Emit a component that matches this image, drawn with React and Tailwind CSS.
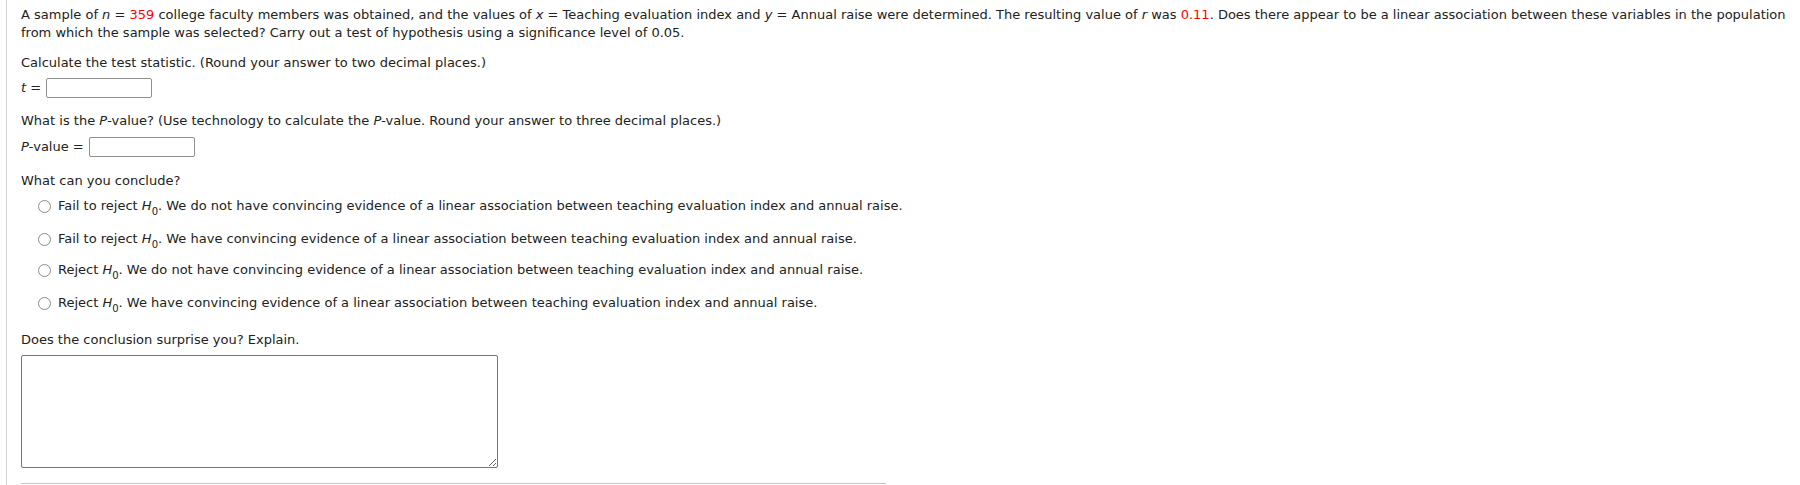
import React from "react";

const V = ({ children }) => <i className="italic">{children}</i>;
const H0 = () => (
  <>
    <i className="italic">H</i>
    <sub className="text-[10px] bottom-[-5px]">0</sub>
  </>
);

function Radio({ children, className = "" }) {
  return (
    <div className={`flex items-center h-[18px] pl-[17px] ${className}`}>
      <span className="w-[13px] h-[13px] rounded-full border border-[#8a8a8a] bg-white shrink-0" />
      <span className="ml-[7px] whitespace-nowrap">{children}</span>
    </div>
  );
}

export default function App() {
  return (
    <div
      className="w-[1800px] h-[485px] bg-white text-[#222] text-[13px] leading-[18px] overflow-hidden"
      style={{ fontFamily: '"DejaVu Sans", Verdana, sans-serif' }}
    >
      <div className="ml-[6px] h-full border-l border-[#d3d3d3] pl-[14px] pt-[6px]">
        <p className="whitespace-nowrap">
          A sample of <V>n</V> = <span className="text-[#ff0000]">359</span> college faculty members was obtained, and the values of <V>x</V> = Teaching evaluation index and <V>y</V> = Annual raise were determined. The resulting value of <V>r</V> was <span className="text-[#ff0000]">0.11</span>. Does there appear to be a linear association between these variables in the population
          <br />
          from which the sample was selected? Carry out a test of hypothesis using a significance level of 0.05.
        </p>

        <p className="mt-[12px]">Calculate the test statistic. (Round your answer to two decimal places.)</p>
        <div className="mt-[6px] flex items-center h-[20px]">
          <span><V>t</V> =</span>
          <span className="ml-[5px] w-[106px] h-[20px] border border-[#8f8f8f] rounded-[2px] bg-white" />
        </div>

        <p className="mt-[14px]">
          What is the <V>P</V>-value? (Use technology to calculate the <V>P</V>-value. Round your answer to three decimal places.)
        </p>
        <div className="mt-[7px] flex items-center h-[20px]">
          <span><V>P</V>-value =</span>
          <span className="ml-[5px] w-[106px] h-[20px] border border-[#8f8f8f] rounded-[2px] bg-white" />
        </div>

        <p className="mt-[15px]">What can you conclude?</p>
        <Radio className="mt-[7px]">
          Fail to reject <H0 />. We do not have convincing evidence of a linear association between teaching evaluation index and annual raise.
        </Radio>
        <Radio className="mt-[15px]">
          Fail to reject <H0 />. We have convincing evidence of a linear association between teaching evaluation index and annual raise.
        </Radio>
        <Radio className="mt-[13px]">
          Reject <H0 />. We do not have convincing evidence of a linear association between teaching evaluation index and annual raise.
        </Radio>
        <Radio className="mt-[15px]">
          Reject <H0 />. We have convincing evidence of a linear association between teaching evaluation index and annual raise.
        </Radio>

        <p className="mt-[19px]">Does the conclusion surprise you? Explain.</p>
        <textarea
          className="block mt-[6px] w-[477px] h-[113px] border border-[#767676] rounded-[2px] bg-white resize"
          readOnly
        />
        <div className="mt-[15px] w-[865px] h-px bg-[#c4c4c4]" />
      </div>
    </div>
  );
}
